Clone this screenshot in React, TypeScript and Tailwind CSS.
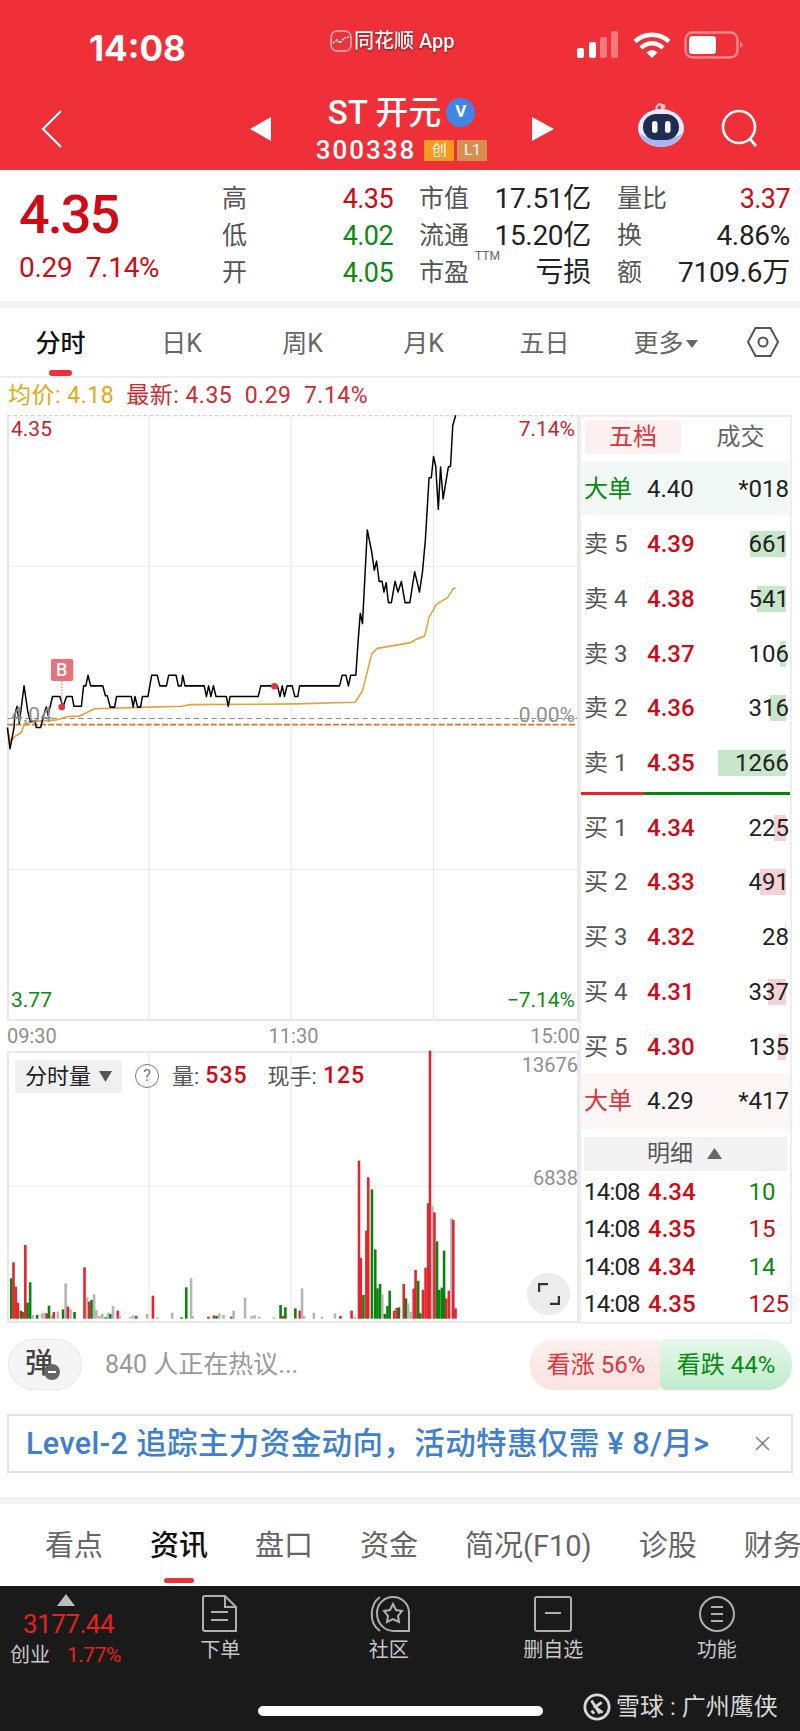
import { Fragment } from "react";

const RED = "text-[#cf0a14]";
const GREEN = "text-[#0a8a12]";

const pricePts =
  "20,800 27,852 38,800 40,770 46,748 52,790 65,698 75,760 82,785 95,785 98,800 110,800 118,770 125,750 130,770 142,724 162,724 170,750 180,724 195,724 200,748 220,748 226,698 232,698 238,672 245,698 278,698 285,722 290,722 298,750 310,750 315,724 355,724 360,750 365,724 372,750 380,750 385,724 400,724 410,672 425,672 432,698 450,698 456,672 476,672 482,698 490,698 494,672 500,698 552,698 558,724 564,698 570,724 577,698 584,724 612,724 617,748 622,724 698,724 705,698 750,698 757,724 763,698 769,724 776,698 790,698 797,724 805,724 810,698 918,698 925,672 935,672 942,698 948,672 962,672 968,590 974,520 980,545 993,316 1005,370 1012,415 1018,392 1025,442 1033,442 1038,468 1044,445 1050,494 1058,494 1068,442 1076,468 1085,442 1095,494 1108,494 1121,418 1134,468 1142,420 1150,340 1160,188 1166,188 1172,136 1178,160 1185,265 1191,162 1198,240 1212,162 1218,160 1224,60 1232,35";
const avgPts =
  "20,800 28,835 40,822 58,812 66,790 90,785 150,782 185,773 215,772 255,754 400,750 490,748 515,744 700,743 800,742 960,738 980,710 1005,620 1020,606 1110,592 1125,584 1148,576 1160,530 1180,498 1210,482 1225,460 1232,458";

// x, top, colour (r / g / n) in the volume drawing's own units
const volBars: [number, number, string][] = [
  [30, 745, "g"], [36, 697, "r"], [42, 770, "r"], [48, 818, "r"], [56, 842, "g"], [62, 846, "r"], [68, 645, "r"], [74, 818, "g"], [81, 757, "g"],
  [88, 855, "n"], [100, 855, "g"], [113, 850, "n"], [120, 848, "n"], [126, 850, "r"], [132, 827, "g"], [138, 855, "n"], [145, 846, "r"], [156, 845, "n"],
  [170, 838, "g"], [177, 760, "n"], [183, 830, "r"], [190, 838, "n"], [201, 846, "g"], [228, 712, "r"], [235, 802, "n"], [241, 815, "r"], [247, 810, "g"],
  [254, 793, "n"], [260, 840, "n"], [268, 858, "n"], [276, 852, "n"], [285, 862, "g"], [292, 848, "n"], [298, 852, "g"], [305, 828, "n"], [318, 842, "r"],
  [323, 858, "n"], [352, 860, "n"], [360, 856, "n"], [368, 858, "r"], [397, 852, "n"], [413, 797, "r"], [425, 862, "n"], [465, 848, "n"], [490, 862, "g"],
  [503, 772, "g"], [516, 745, "n"], [520, 858, "n"], [563, 860, "r"], [578, 856, "r"], [585, 858, "g"], [592, 850, "n"], [604, 855, "n"], [625, 860, "r"],
  [631, 842, "n"], [662, 803, "n"], [680, 858, "n"], [688, 856, "n"], [700, 860, "n"], [740, 862, "n"], [758, 825, "g"], [765, 858, "r"], [771, 832, "g"],
  [798, 835, "g"], [810, 842, "r"], [816, 775, "n"], [822, 858, "n"], [848, 848, "n"], [870, 860, "n"], [905, 850, "n"], [920, 858, "r"], [950, 842, "r"],
  [958, 860, "n"], [970, 392, "r"], [975, 684, "r"], [982, 795, "g"], [990, 602, "r"], [995, 442, "r"], [1005, 478, "g"], [1014, 658, "g"], [1020, 775, "g"],
  [1027, 762, "g"], [1033, 793, "n"], [1040, 852, "g"], [1047, 828, "g"], [1053, 782, "g"], [1065, 842, "r"], [1072, 834, "r"], [1078, 832, "g"], [1091, 762, "r"],
  [1097, 805, "g"], [1103, 820, "n"], [1110, 845, "n"], [1118, 776, "r"], [1123, 720, "r"], [1130, 752, "g"], [1136, 850, "g"], [1143, 780, "r"], [1150, 713, "r"],
  [1157, 520, "r"], [1162, 62, "r"], [1168, 530, "n"], [1174, 547, "r"], [1181, 634, "g"], [1187, 780, "g"], [1194, 773, "g"], [1200, 662, "g"], [1206, 805, "r"],
  [1213, 782, "r"], [1220, 565, "n"], [1225, 570, "r"], [1231, 835, "r"],
];
const volColor: Record<string, string> = { r: "#e5252e", g: "#0a820f", n: "#b5b5b5" };

const asks = [
  { label: "卖 5", price: "4.39", qty: "661", bar: "w-[36px]" },
  { label: "卖 4", price: "4.38", qty: "541", bar: "w-[29px]" },
  { label: "卖 3", price: "4.37", qty: "106", bar: "w-[6px]" },
  { label: "卖 2", price: "4.36", qty: "316", bar: "w-[16px]" },
  { label: "卖 1", price: "4.35", qty: "1266", bar: "w-[68px]" },
];
const bids = [
  { label: "买 1", price: "4.34", qty: "225", bar: "w-[12px]" },
  { label: "买 2", price: "4.33", qty: "491", bar: "w-[26px]" },
  { label: "买 3", price: "4.32", qty: "28", bar: "w-[1px]" },
  { label: "买 4", price: "4.31", qty: "337", bar: "w-[18px]" },
  { label: "买 5", price: "4.30", qty: "135", bar: "w-[8px]" },
];
const ticks = [
  { price: "4.34", qty: "10", cls: GREEN },
  { price: "4.35", qty: "15", cls: RED },
  { price: "4.34", qty: "14", cls: GREEN },
  { price: "4.35", qty: "125", cls: RED },
];

function StatusIcons() {
  return (
    <div className="flex items-center">
      <svg width="44" height="28" viewBox="0 0 44 28">
        <rect x="1" y="17" width="7" height="10" rx="2" fill="#fff" />
        <rect x="13" y="11" width="7" height="16" rx="2" fill="#fff" />
        <rect x="24" y="6" width="7" height="21" rx="2" fill="#f7797f" />
        <rect x="35" y="0" width="7" height="27" rx="2" fill="#f7797f" />
      </svg>
      <svg className="ml-[13px]" width="38" height="28" viewBox="0 0 38 28" fill="none" stroke="#fff" strokeWidth="4.5">
        <path d="M2 10.5C11.5 1.5 26.5 1.5 36 10.5" />
        <path d="M8 17C14.5 10.5 23.5 10.5 30 17" />
        <path d="M13.5 21.5C17 18 21 18 24.5 21.5L19 27Z" fill="#fff" stroke="none" />
      </svg>
      <svg className="ml-[13px]" width="60" height="28" viewBox="0 0 60 28">
        <rect x="1.5" y="1.5" width="52" height="25" rx="7" fill="none" stroke="#f8878c" strokeWidth="2.5" />
        <rect x="5" y="5" width="27" height="18" rx="3.5" fill="#fff" />
        <path d="M56 10L59 14L56 18Z" fill="#f8878c" />
      </svg>
    </div>
  );
}

function Robot() {
  return (
    <svg width="48" height="44" viewBox="0 0 48 44">
      <path d="M20 8C18 3 22 0 25 2" fill="none" stroke="#f5c6cf" strokeWidth="2" />
      <circle cx="26" cy="3.5" r="2.5" fill="#f5c6cf" />
      <ellipse cx="24" cy="25" rx="23" ry="19" fill="#eceaff" />
      <path d="M3 30C6 40 16 44 24 44C32 44 42 40 45 30C38 38 10 38 3 30Z" fill="#a9b4f5" />
      <rect x="6" y="11" width="36" height="26" rx="13" fill="#1e2d52" />
      <rect x="15" y="18" width="5.5" height="12" rx="2.7" fill="#fff" />
      <rect x="28" y="18" width="5.5" height="12" rx="2.7" fill="#fff" />
    </svg>
  );
}

function Header() {
  return (
    <header className="flex h-[170px] shrink-0 flex-col bg-[#ef3038] text-white">
      <div className="flex h-[92px] items-center pb-[2px]">
        <span className="ml-[89px] w-[100px] pt-[6px] font-[Inter,sans-serif] text-[35px] font-bold">14:08</span>
        <div className="ml-[141px] flex w-[240px] items-center pb-[8px]">
          <svg width="22" height="24" viewBox="0 0 22 24">
            <rect x="1" y="2" width="20" height="20" rx="6" fill="#e9343c" stroke="#f9b4b6" strokeWidth="1.5" />
            <path d="M3 14L7 11L10 14L14 9L19 8" fill="none" stroke="#fff" strokeWidth="1.6" strokeDasharray="2 1.2" />
          </svg>
          <span className="ml-[2px] text-[20px] font-medium drop-shadow-[0_1px_1px_rgba(90,0,0,0.7)]">同花顺 App</span>
        </div>
        <div className="ml-[6px]">
          <StatusIcons />
        </div>
      </div>
      <div className="flex h-[78px] items-start">
        <svg className="ml-[41px] mt-[18px]" width="22" height="38" viewBox="0 0 22 38" fill="none" stroke="#fff" strokeWidth="2.2">
          <path d="M20 1L2 19L20 37" />
        </svg>
        <svg className="ml-[187px] mt-[25px]" width="21" height="24" viewBox="0 0 21 24">
          <path d="M21 0V24L0 12Z" fill="#fff" />
        </svg>
        <div className="flex w-[261px] flex-col items-center">
          <div className="flex h-[40px] items-center">
            <span className="text-[33px] font-medium leading-none">ST 开元</span>
            <span className="ml-[5px] flex h-[29px] w-[29px] items-center justify-center rounded-full bg-[#3f86e6] text-[17px] font-bold">V</span>
          </div>
          <div className="mt-[3px] flex items-center">
            <span className="text-[26px] font-medium leading-[30px] tracking-[2px]">300338</span>
            <span className="ml-[8px] flex h-[21px] w-[30px] items-center justify-center bg-[#f59a1f] text-[15px]">创</span>
            <span className="ml-[3px] flex h-[21px] w-[30px] items-center justify-center bg-[#d98d4f] text-[15px]">L1</span>
          </div>
        </div>
        <svg className="mt-[25px]" width="22" height="24" viewBox="0 0 22 24">
          <path d="M0 0V24L22 12Z" fill="#fff" />
        </svg>
        <div className="ml-[83px] mt-[11px]">
          <Robot />
        </div>
        <svg className="ml-[36px] mt-[17px]" width="40" height="40" viewBox="0 0 40 40" fill="none" stroke="#fff" strokeWidth="2.6">
          <circle cx="18" cy="18" r="16" />
          <path d="M29 30L35 37" strokeWidth="3" />
        </svg>
      </div>
    </header>
  );
}

function StatCell({ label, value, valueCls, sup }: { label: string; value: string; valueCls: string; sup?: boolean }) {
  return (
    <div className="relative flex items-center justify-between">
      <span className="text-[25px] leading-[36px] text-[#555]">{label}</span>
      {sup ? <span className="absolute left-[56px] top-[-8px] text-[12px] text-[#666]">TTM</span> : null}
      <span className={`leading-[36px] ${valueCls}`}>{value}</span>
    </div>
  );
}

const priceVal = "text-[27px] tracking-[-0.6px]";
const plainVal = "text-[28px] tracking-[-0.3px] text-[#222]";

function Quote() {
  return (
    <section className="flex h-[131px] shrink-0 bg-white">
      <div className="w-[222px] pl-[19px] pt-[14px]">
        <div className={`text-[54px] font-medium leading-[62px] tracking-[-2px] ${RED}`}>4.35</div>
        <div className={`mt-[6px] text-[28px] leading-[32px] tracking-[-0.3px] ${RED}`}>0.29&nbsp;&nbsp;7.14%</div>
      </div>
      <div className="grid h-fit w-[568px] grid-cols-[171px_172px_173px] gap-x-[26px] gap-y-[1px] pt-[11px]">
        <StatCell label="高" value="4.35" valueCls={`${priceVal} ${RED}`} />
        <StatCell label="市值" value="17.51亿" valueCls={plainVal} />
        <StatCell label="量比" value="3.37" valueCls={`${priceVal} ${RED}`} />
        <StatCell label="低" value="4.02" valueCls={`${priceVal} ${GREEN}`} />
        <StatCell label="流通" value="15.20亿" valueCls={plainVal} />
        <StatCell label="换" value="4.86%" valueCls={plainVal} />
        <StatCell label="开" value="4.05" valueCls={`${priceVal} ${GREEN}`} />
        <StatCell label="市盈" value="亏损" valueCls={plainVal} sup />
        <StatCell label="额" value="7109.6万" valueCls={plainVal} />
      </div>
    </section>
  );
}

function ChartTabs() {
  const tabs = ["分时", "日K", "周K", "月K", "五日"];
  return (
    <nav className="flex h-[70px] shrink-0 items-center border-b-2 border-[#eeeeee] bg-white text-[25px] text-[#666]">
      {tabs.map((t, i) => (
        <div key={t} className={`relative flex h-full w-[121px] items-center justify-center pt-[3px] ${i === 0 ? "font-medium text-[#111]" : ""}`}>
          {t}
          {i === 0 ? <span className="absolute bottom-[0px] left-[49px] h-[6px] w-[23px] rounded-full bg-[#ef3038]" /> : null}
        </div>
      ))}
      <div className="flex w-[121px] items-center justify-center pt-[3px]">
        更多
        <svg className="ml-[2px]" width="12" height="10" viewBox="0 0 12 10">
          <path d="M0 1H12L6 9Z" fill="#666" />
        </svg>
      </div>
      <svg className="ml-[20px]" width="34" height="34" viewBox="0 0 34 34" fill="none" stroke="#555" strokeWidth="2">
        <path d="M9.5 3H24.5L32 17L24.5 31H9.5L2 17Z" />
        <circle cx="17" cy="17" r="4.5" />
      </svg>
    </nav>
  );
}

function PriceChart() {
  return (
    <div className="relative h-[606px] border-2 border-t-0 border-[#e8e8e8]">
      <svg className="absolute left-[-9px] top-[-14px]" width="580" height="640" viewBox="0 0 1568 1568" preserveAspectRatio="none">
        {[405, 1148].map((y) => (
          <line key={y} x1="20" x2="1560" y1={y} y2={y} stroke="#e6e6e6" strokeWidth="2" />
        ))}
        {[403, 787, 1172].map((x) => (
          <line key={x} x1={x} x2={x} y1="36" y2="1516" stroke="#e8e8e8" strokeWidth="3" />
        ))}
        <line x1="20" x2="1560" y1="36" y2="36" stroke="#bbbbbb" strokeWidth="2" strokeDasharray="10 6" />
        <line x1="20" x2="1560" y1="778" y2="778" stroke="#666" strokeWidth="2" strokeDasharray="14 10" />
        <line x1="20" x2="1560" y1="793" y2="793" stroke="#c9772a" strokeWidth="4" strokeDasharray="16 6" />
        <polyline points={avgPts} fill="none" stroke="#e3a23a" strokeWidth="4" />
        <polyline points={pricePts} fill="none" stroke="#000" strokeWidth="4" strokeLinejoin="round" />
        <line x1="167" x2="167" y1="686" y2="750" stroke="#e5626c" strokeWidth="3" strokeDasharray="3 4" />
        <ellipse cx="167" cy="750" rx="9" ry="8" fill="#e0343f" />
        <ellipse cx="742" cy="699" rx="9" ry="8" fill="#e0343f" />
        <rect x="138" y="632" width="60" height="54" rx="4" fill="#e8717b" />
      </svg>
      <span className="absolute left-[47px] top-[245px] text-[18px] font-medium leading-[20px] text-white">B</span>
      <span className="absolute left-[2px] top-[0px] text-[21px] leading-[28px] text-[#c8232c]">4.35</span>
      <span className="absolute right-[2px] top-[0px] text-[21px] leading-[28px] text-[#c8232c]">7.14%</span>
      <span className="absolute left-[2px] top-[286px] text-[21px] leading-[28px] text-[#8f8f8f]">4.04</span>
      <span className="absolute right-[2px] top-[286px] text-[21px] leading-[28px] text-[#8f8f8f]">0.00%</span>
      <span className="absolute bottom-[5px] left-[2px] text-[21px] leading-[28px] text-[#0a8a12]">3.77</span>
      <span className="absolute bottom-[5px] right-[2px] text-[21px] leading-[28px] text-[#0a8a12]">−7.14%</span>
    </div>
  );
}

function VolumeChart() {
  return (
    <div className="relative h-[272px] border-2 border-[#e8e8e8]">
      <svg className="absolute left-[-9px] top-[-23px]" width="580" height="300" viewBox="0 0 1568 900" preserveAspectRatio="none">
        <line x1="20" x2="1560" y1="468" y2="468" stroke="#e6e6e6" strokeWidth="2" />
        {[403, 787, 1172].map((x) => (
          <line key={x} x1={x} x2={x} y1="62" y2="878" stroke="#e8e8e8" strokeWidth="3" />
        ))}
        {volBars.map(([x, top, c], i) => (
          <rect key={i} x={x - 3} y={top} width="7" height={866 - top} fill={volColor[c]} />
        ))}
      </svg>
      <div className="absolute left-[6px] top-[6px] flex items-center">
        <div className="flex h-[33px] w-[107px] items-center justify-center rounded-[3px] bg-[#f0f0f0] text-[22px] text-[#222]">
          分时量
          <svg className="ml-[8px]" width="13" height="11" viewBox="0 0 13 11">
            <path d="M0 0H13L6.5 11Z" fill="#555" />
          </svg>
        </div>
        <span className="ml-[13px] flex h-[24px] w-[24px] items-center justify-center rounded-full border-[1.5px] border-[#777] text-[16px] leading-none text-[#777]">?</span>
        <span className="ml-[13px] text-[22px] text-[#555]">量:</span>
        <span className={`ml-[6px] text-[23px] font-medium tracking-[1px] ${RED}`}>535</span>
        <span className="ml-[20px] text-[22px] text-[#555]">现手:</span>
        <span className={`ml-[6px] text-[23px] font-medium tracking-[1px] ${RED}`}>125</span>
      </div>
      <span className="absolute right-[-1px] top-[-1px] text-[20px] leading-[26px] text-[#8f8f8f]">13676</span>
      <span className="absolute right-[-1px] top-[112px] text-[20px] leading-[26px] text-[#8f8f8f]">6838</span>
      <div className="absolute bottom-[6px] right-[7px] flex h-[42px] w-[43px] items-center justify-center rounded-full bg-[#ececec]">
        <svg width="22" height="22" viewBox="0 0 22 22" fill="none" stroke="#333" strokeWidth="2.4">
          <path d="M1 9V1H10" />
          <path d="M21 13V21H12" />
        </svg>
      </div>
    </div>
  );
}

function DepthRow({ label, price, qty, bar, barCls }: { label: string; price: string; qty: string; bar: string; barCls: string }) {
  return (
    <div className="flex h-[54.7px] items-center text-[24px]">
      <span className="w-[66px] pl-[3px] text-[#555]">{label}</span>
      <span className={`${RED} w-[56px] font-medium`}>{price}</span>
      <div className="relative flex h-[26px] flex-1 items-center justify-end pr-[1px] text-[#222]">
        <span className={`absolute bottom-0 right-[4px] top-0 ${bar} ${barCls}`} />
        <span className="relative">{qty}</span>
      </div>
    </div>
  );
}

function OrderBook() {
  return (
    <aside className="flex h-[909px] w-[213px] flex-col border-x-2 border-b-2 border-t-2 border-[#eeeeee] text-[#222]">
      <div className="flex h-[45px] shrink-0 pl-[4px] pt-[3px] text-[24px]">
        <div className="flex h-[34px] w-[96px] items-center justify-center rounded-[3px] bg-[#fdf0f0] text-[#d9363e]">五档</div>
        <div className="flex h-[34px] flex-1 items-center justify-center pl-[10px] text-[#666]">成交</div>
      </div>
      <div className="flex h-[53px] shrink-0 items-center bg-[#f1f8f5] pl-[3px] pr-[1px] text-[24px]">
        <span className={`w-[63px] ${GREEN}`}>大单</span>
        <span className="flex-1">4.40</span>
        <span>*018</span>
      </div>
      <div className="mt-[2px] shrink-0">
        {asks.map((r) => (
          <DepthRow key={r.label} {...r} barCls="bg-[#c8e6c9]" />
        ))}
      </div>
      <div className="mt-[2px] flex h-[3px] shrink-0">
        <span className="w-[63px] bg-[#e5252e]" />
        <span className="flex-1 bg-[#0a820f]" />
      </div>
      <div className="mt-[5px] shrink-0">
        {bids.map((r) => (
          <DepthRow key={r.label} {...r} barCls="bg-[#f6d2d6]" />
        ))}
      </div>
      <div className="flex h-[55px] shrink-0 items-center bg-[#fdf6f6] pl-[3px] pr-[1px] text-[24px]">
        <span className="w-[63px] text-[#d9363e]">大单</span>
        <span className="flex-1">4.29</span>
        <span>*417</span>
      </div>
      <div className="mx-[3px] mt-[8px] flex h-[34px] shrink-0 items-center bg-[#f2f2f2] pl-[63px] text-[23px] text-[#555]">
        明细
        <svg className="ml-[14px]" width="15" height="11" viewBox="0 0 15 11">
          <path d="M7.5 0L15 11H0Z" fill="#666" />
        </svg>
      </div>
      <div className="mt-[3px] grid grid-cols-[64px_1fr_auto] items-center pl-[3px] pr-[1px] text-[24px] leading-[37.4px]">
        {ticks.map((t, i) => (
          <Fragment key={i}>
            <span className="tracking-[-0.8px]">14:08</span>
            <span className={`${RED} font-medium`}>{t.price}</span>
            <span className={t.cls}>{t.qty}</span>
          </Fragment>
        ))}
      </div>
    </aside>
  );
}

function CommentBar() {
  return (
    <div className="flex h-[90px] shrink-0 items-center bg-white pb-[9px] pl-[8px] pr-[8px]">
      <div className="relative flex h-[51px] w-[74px] items-center justify-center rounded-full border border-[#e8e8e8] bg-[#f5f5f5] pb-[2px] pr-[12px] text-[28px] font-medium text-[#444]">
        弹
        <span className="absolute bottom-[9px] right-[21px] flex h-[16px] w-[16px] items-center justify-center rounded-full bg-[#666]">
          <span className="h-[2px] w-[8px] bg-white" />
        </span>
      </div>
      <span className="ml-[23px] flex-1 text-[25px] text-[#999]">840 人正在热议...</span>
      <div className="flex h-[51px] w-[132px] items-center justify-center rounded-l-[24px] rounded-r-[6px] bg-linear-to-b from-[#fdf0ee] to-[#fbe2df] text-[24px] text-[#e0343c]">看涨 56%</div>
      <div className="ml-[-2px] flex h-[51px] w-[132px] items-center justify-center rounded-l-[6px] rounded-r-[24px] bg-linear-to-b from-[#e6f8ea] to-[#bfeccb] text-[24px] text-[#0a8a12]">看跌 44%</div>
    </div>
  );
}

function Banner() {
  return (
    <div className="mx-[7px] flex h-[59px] shrink-0 items-center border-2 border-[#e2e2e2] bg-white pl-[17px] pr-[21px]">
      <span className="flex-1 whitespace-nowrap text-[30.5px] font-medium tracking-[0.4px] text-[#3f7fd0]">Level-2 追踪主力资金动向，活动特惠仅需 ¥ 8/月&gt;</span>
      <svg width="15" height="15" viewBox="0 0 15 15" stroke="#8a8a8a" strokeWidth="1.6">
        <path d="M1 1L14 14M14 1L1 14" />
      </svg>
    </div>
  );
}

function NewsTabs() {
  const tabs = ["看点", "资讯", "盘口", "资金", "简况(F10)", "诊股", "财务"];
  return (
    <nav className="flex h-[82px] shrink-0 gap-[47px] overflow-hidden whitespace-nowrap bg-white pl-[45px] pt-[21px] text-[29px] text-[#666]">
      {tabs.map((t) => (
        <div key={t} className={`relative h-fit shrink-0 ${t === "资讯" ? "font-medium text-[#111]" : ""}`}>
          {t}
          {t === "资讯" ? <span className="absolute left-[14px] top-[53px] h-[5px] w-[30px] rounded-full bg-[#ef3038]" /> : null}
        </div>
      ))}
    </nav>
  );
}

function FooterItem({ label, width, children }: { label: string; width: string; children: React.ReactNode }) {
  return (
    <div className={`flex flex-col items-center ${width}`}>
      <div className="flex h-[40px] items-center">{children}</div>
      <span className="mt-[2px] text-[20px] leading-[28px] text-[#c8c8c8]">{label}</span>
    </div>
  );
}

function Footer() {
  const s = "#b0b0b0";
  return (
    <footer className="relative flex-1 bg-[#1a1a1a] pt-[8px]">
      <div className="flex items-start">
        <div className="w-[137px] pl-[10px]">
          <svg className="ml-[47px]" width="18" height="12" viewBox="0 0 18 12">
            <path d="M9 0L18 12H0Z" fill="#bdbdbd" />
          </svg>
          <div className="ml-[13px] text-[26px] leading-[36px] tracking-[-0.5px] text-[#e8211f]">3177.44</div>
          <div className="flex items-center leading-[26px]">
            <span className="text-[20px] text-[#c8c8c8]">创业</span>
            <span className="ml-[17px] text-[21px] tracking-[-0.5px] text-[#e8211f]">1.77%</span>
          </div>
        </div>
        <FooterItem label="下单" width="w-[170px]">
          <svg width="36" height="38" viewBox="0 0 36 38" fill="none" stroke={s} strokeWidth="2">
            <path d="M3 1H23L34 12V36H3Q1 36 1 34V3Q1 1 3 1Z" />
            <path d="M23 1V12H34" />
            <path d="M9 17H26M9 25H26" />
          </svg>
        </FooterItem>
        <FooterItem label="社区" width="w-[170px]">
          <svg width="42" height="38" viewBox="0 0 42 38" fill="none" stroke={s} strokeWidth="2">
            <path d="M12 2C2 9 0 28 12 36" />
            <path d="M41 36V18C41 9 34 2 25 2C16 2 9 9 9 18C9 29 17 36 26 36Z" />
            <path d="M25 9L28 15L34 16L30 21L31 27L25 24L19 27L20 21L16 16L22 15Z" />
          </svg>
        </FooterItem>
        <FooterItem label="删自选" width="w-[162px]">
          <svg width="38" height="36" viewBox="0 0 38 36" fill="none" stroke={s} strokeWidth="2">
            <rect x="1" y="1" width="36" height="34" rx="2" />
            <path d="M11 17H27" />
          </svg>
        </FooterItem>
        <FooterItem label="功能" width="w-[168px]">
          <svg width="36" height="36" viewBox="0 0 36 36" fill="none" stroke={s} strokeWidth="2">
            <circle cx="18" cy="18" r="17" />
            <path d="M12 11H24M12 18H24M12 25H24" />
          </svg>
        </FooterItem>
      </div>
      <span className="absolute bottom-[15px] left-[258px] h-[10px] w-[285px] rounded-full bg-white" />
      <div className="absolute bottom-[6px] left-[583px] flex items-center text-[24px] text-[#d8d8d8]">
        <svg width="28" height="28" viewBox="0 0 30 30" fill="none" stroke="#d8d8d8" strokeWidth="3">
          <circle cx="15" cy="15" r="13" />
          <path d="M9 8L18 22M20 10L13 15L21 21M9 19L12 22" />
        </svg>
        <span className="ml-[5px]">雪球 : 广州鹰侠</span>
      </div>
    </footer>
  );
}

export default function App() {
  return (
    <div className="flex h-[1731px] w-[800px] flex-col overflow-hidden bg-white font-[Roboto,'Noto_Sans_CJK_SC',sans-serif]">
      <Header />
      <Quote />
      <div className="h-[7px] shrink-0 bg-[#f3f3f3]" />
      <ChartTabs />
      <div className="flex h-[36px] shrink-0 items-center gap-[12px] pl-[8px] text-[23px] tracking-[0.5px]">
        <span className="text-[#e6a817]">均价: 4.18</span>
        <span className="text-[#cf2a30]">最新: 4.35&nbsp;&nbsp;0.29&nbsp;&nbsp;7.14%</span>
      </div>
      <div className="flex shrink-0 pt-[1px]">
        <div className="ml-[7px] w-[572px] shrink-0">
          <PriceChart />
          <div className="flex h-[30px] items-center justify-between text-[20px] text-[#8f8f8f]">
            <span>09:30</span>
            <span>11:30</span>
            <span className="mr-[-1px]">15:00</span>
          </div>
          <VolumeChart />
        </div>
        <OrderBook />
      </div>
      <CommentBar />
      <Banner />
      <div className="h-[24px] shrink-0" />
      <div className="h-[7px] shrink-0 bg-[#f3f3f3]" />
      <NewsTabs />
      <Footer />
    </div>
  );
}
